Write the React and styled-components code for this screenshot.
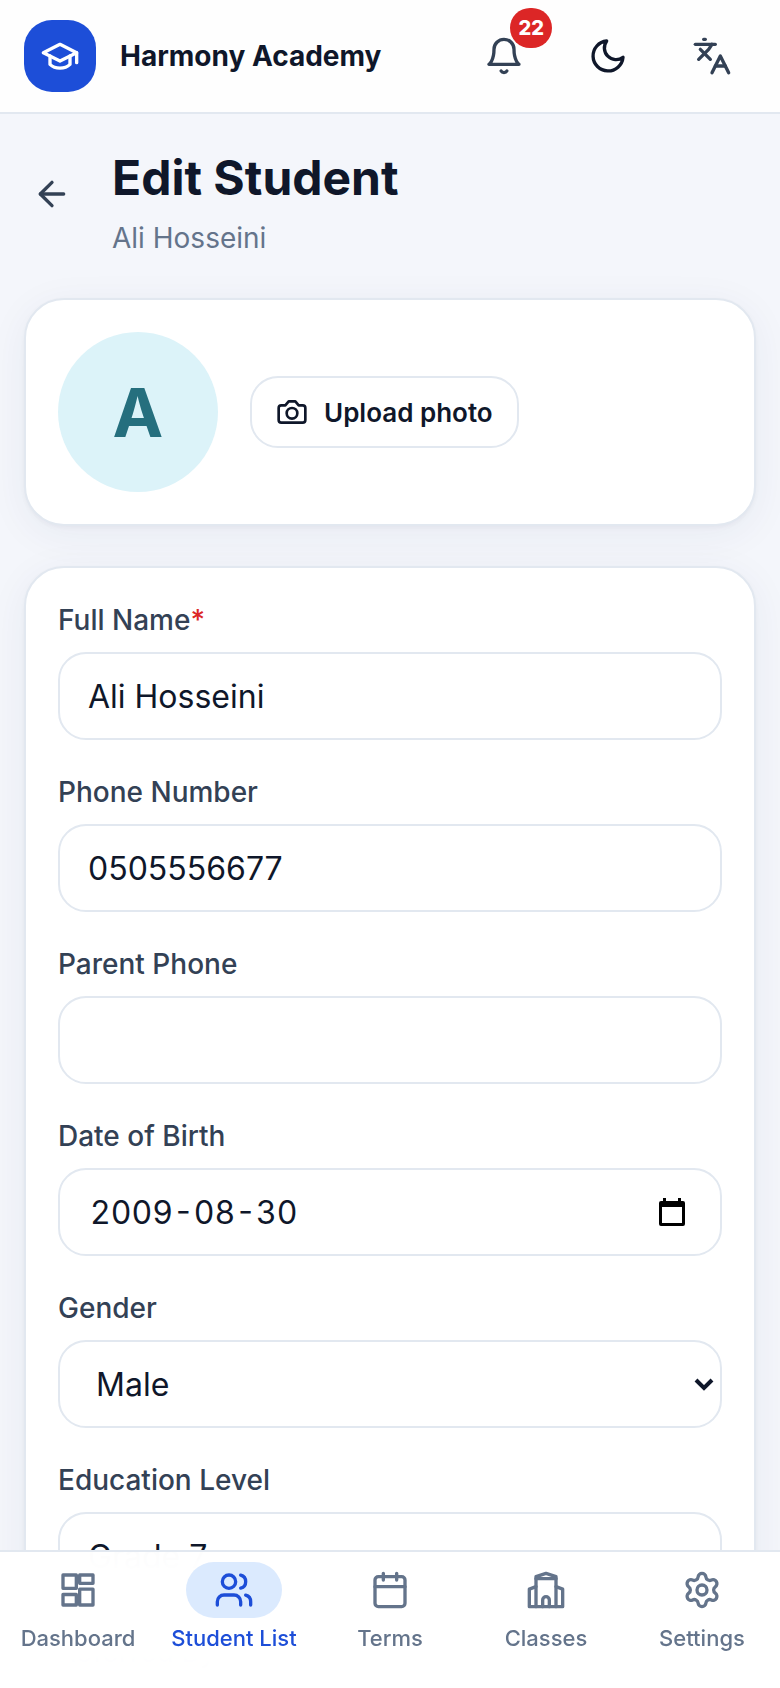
import styled, { createGlobalStyle } from "styled-components";

const ICONS = {
    cap: (
        <>
            <path d="M22 10 12 5 2 10l10 5 10-5z" />
            <path d="M6 12v5c3 3 9 3 12 0v-5" />
            <path d="M22 10v6" />
        </>
    ),
    bell: (
        <>
            <path d="M18 8A6 6 0 0 0 6 8c0 7-3 9-3 9h18s-3-2-3-9" />
            <path d="M13.73 21a2 2 0 0 1-3.46 0" />
        </>
    ),
    moon: <path d="M21 12.79A9 9 0 1 1 11.21 3 7 7 0 0 0 21 12.79z" />,
    translate: (
        <>
            <path d="m5 8 6 6" />
            <path d="m4 14 6-6 2-3" />
            <path d="M2 5h12" />
            <path d="M7 2h1" />
            <path d="m22 22-5-10-5 10" />
            <path d="M14 18h6" />
        </>
    ),
    back: (
        <>
            <path d="M19 12H5" />
            <path d="m12 19-7-7 7-7" />
        </>
    ),
    camera: (
        <>
            <path d="M14.5 4h-5L7 7H4a2 2 0 0 0-2 2v9a2 2 0 0 0 2 2h16a2 2 0 0 0 2-2V9a2 2 0 0 0-2-2h-3z" />
            <circle cx="12" cy="13" r="4" />
        </>
    ),
    dashboard: (
        <>
            <path d="M3 3h8v8H3z" />
            <path d="M13 3h8v5h-8z" />
            <path d="M13 11.5h8V21h-8z" />
            <path d="M3 14.7h8V21H3z" />
        </>
    ),
    users: (
        <>
            <path d="M16 21v-2a4 4 0 0 0-4-4H6a4 4 0 0 0-4 4v2" />
            <circle cx="9" cy="7" r="4" />
            <path d="M22 21v-2a4 4 0 0 0-3-3.87" />
            <path d="M16 3.13a4 4 0 0 1 0 7.75" />
        </>
    ),
    calendar: (
        <>
            <rect x="3" y="4" width="18" height="18" rx="2" />
            <path d="M16 2v4M8 2v4M3 10h18" />
        </>
    ),
    building: (
        <>
            <path d="M6 22V4l6-2 6 2v18" />
            <path d="M6 5.2h12" />
            <path d="M6 10l-4 1.5V22h20V11.5L18 10" />
            <path d="M10 22v-4a2 2 0 0 1 4 0v4" />
        </>
    ),
    settings: (
        <>
            <path d="M9.671 4.136a2.34 2.34 0 0 1 4.659 0 2.34 2.34 0 0 0 3.319 1.915 2.34 2.34 0 0 1 2.33 4.033 2.34 2.34 0 0 0 0 3.831 2.34 2.34 0 0 1-2.33 4.033 2.34 2.34 0 0 0-3.319 1.915 2.34 2.34 0 0 1-4.659 0 2.34 2.34 0 0 0-3.32-1.915 2.34 2.34 0 0 1-2.33-4.033 2.34 2.34 0 0 0 0-3.831A2.34 2.34 0 0 1 6.35 6.051a2.34 2.34 0 0 0 3.319-1.915" />
            <circle cx="12" cy="12" r="3" />
        </>
    ),
};

const NAV = [
    { label: "Dashboard", icon: "dashboard" },
    { label: "Student List", icon: "users", active: true },
    { label: "Terms", icon: "calendar" },
    { label: "Classes", icon: "building" },
    { label: "Settings", icon: "settings" },
];

const Icon = ({ name, size = 40 }) => (
    <IconSvg viewBox="0 0 24 24" width={size} height={size} aria-hidden="true">
        {ICONS[name]}
    </IconSvg>
);

const App = () => {
    return (
        <Shell>
            <GlobalStyle />
            <Header>
                <Logo>
                    <Icon name="cap" />
                </Logo>
                <Brand>Harmony Academy</Brand>
                <Actions>
                    <IconButton aria-label="Notifications">
                        <Icon name="bell" />
                        <Badge>22</Badge>
                    </IconButton>
                    <IconButton aria-label="Dark mode" $dark>
                        <Icon name="moon" />
                    </IconButton>
                    <IconButton aria-label="Language">
                        <Icon name="translate" />
                    </IconButton>
                </Actions>
            </Header>

            <Main>
                <PageHead>
                    <BackButton aria-label="Back">
                        <Icon name="back" />
                    </BackButton>
                    <div>
                        <Title>Edit Student</Title>
                        <Subtitle>Ali Hosseini</Subtitle>
                    </div>
                </PageHead>

                <PhotoCard>
                    <Avatar>A</Avatar>
                    <UploadButton type="button">
                        <Icon name="camera" size={32} />
                        Upload photo
                    </UploadButton>
                </PhotoCard>

                <FormCard>
                    <Field>
                        <Label htmlFor="name">
                            Full Name<Required>*</Required>
                        </Label>
                        <Input id="name" defaultValue="Ali Hosseini" />
                    </Field>
                    <Field>
                        <Label htmlFor="phone">Phone Number</Label>
                        <Input id="phone" type="tel" defaultValue="0505556677" />
                    </Field>
                    <Field>
                        <Label htmlFor="parent">Parent Phone</Label>
                        <Input id="parent" type="tel" />
                    </Field>
                    <Field>
                        <Label htmlFor="birth">Date of Birth</Label>
                        <InputWrap>
                            <DateInput id="birth" inputMode="numeric" defaultValue="2009-08-30" />
                            <PickerButton type="button" aria-label="Open calendar">
                                <svg viewBox="0 0 26 28" width="26" height="28" aria-hidden="true">
                                    <path
                                        fillRule="evenodd"
                                        d="M4 0h3v3h12V0h3v3h2a2 2 0 0 1 2 2v21a2 2 0 0 1-2 2H2a2 2 0 0 1-2-2V5a2 2 0 0 1 2-2h2zM3 9v16h20V9z"
                                    />
                                </svg>
                            </PickerButton>
                        </InputWrap>
                    </Field>
                    <Field>
                        <Label htmlFor="gender">Gender</Label>
                        <InputWrap>
                            <Select id="gender" defaultValue="Male">
                                <option>Male</option>
                                <option>Female</option>
                            </Select>
                            <Chevron viewBox="0 0 20 14" aria-hidden="true">
                                <path d="m2 2 8 8 8-8" />
                            </Chevron>
                        </InputWrap>
                    </Field>
                    <Field>
                        <Label htmlFor="level">Education Level</Label>
                        <Input id="level" defaultValue="Grade 7" />
                    </Field>
                    <Field>
                        <Label htmlFor="referred">Referred By</Label>
                        <Input id="referred" />
                    </Field>
                </FormCard>
            </Main>

            <BottomNav>
                {NAV.map((item) => (
                    <NavLink href="#" key={item.label} $active={item.active}>
                        <NavPill $active={item.active}>
                            <Icon name={item.icon} />
                        </NavPill>
                        {item.label}
                    </NavLink>
                ))}
            </BottomNav>
        </Shell>
    );
};

const GlobalStyle = createGlobalStyle`
    * {
        box-sizing: border-box;
    }

    body {
        margin: 0;
        color: #0f172a;
        background: #f4f6fb;
        font-family: Inter, "Liberation Sans", sans-serif;
    }

    button, input, select {
        font-family: inherit;
        color: inherit;
    }
`;

const Shell = styled.div`
    position: relative;
    display: flex;
    flex-direction: column;
    height: 100vh;
    overflow: hidden;
`;

const IconSvg = styled.svg`
    display: block;
    flex-shrink: 0;
    fill: none;
    stroke: currentColor;
    stroke-width: 2;
    stroke-linecap: round;
    stroke-linejoin: round;
`;

const Header = styled.header`
    display: flex;
    flex-shrink: 0;
    align-items: center;
    gap: 24px;
    padding: 12px 24px;
    background: #fefefe;
    border-bottom: 2px solid #e2e8f0;
`;

const Logo = styled.div`
    display: grid;
    place-items: center;
    width: 72px;
    height: 72px;
    border-radius: 28px;
    color: #ffffff;
    background: #1d4ed8;
`;

const Brand = styled.span`
    flex: 1;
    font-size: 28px;
    line-height: 40px;
    font-weight: 700;
`;

const Actions = styled.div`
    display: flex;
    gap: 16px;
`;

const IconButton = styled.button`
    position: relative;
    display: grid;
    place-items: center;
    width: 88px;
    height: 88px;
    padding: 0;
    border: 0;
    border-radius: 28px;
    background: transparent;
    color: ${(props) => (props.$dark ? "#0f172a" : "#334155")};
`;

const Badge = styled.span`
    position: absolute;
    top: -4px;
    right: -4px;
    min-width: 40px;
    padding: 0 8px;
    border-radius: 20px;
    color: #ffffff;
    background: #dc2626;
    font-size: 20px;
    line-height: 40px;
    font-weight: 800;
`;

const Main = styled.main`
    flex: 1;
    min-height: 0;
    overflow-y: auto;
    scrollbar-width: none;
    padding: 32px 24px 160px;
`;

const PageHead = styled.div`
    display: flex;
    align-items: flex-start;
    gap: 24px;
    margin-bottom: 40px;
`;

const BackButton = styled.button`
    display: grid;
    place-items: center;
    width: 72px;
    height: 72px;
    margin: 12px 0 0 -8px;
    padding: 0;
    border: 0;
    border-radius: 28px;
    background: transparent;
    color: #334155;
`;

const Title = styled.h1`
    margin: 0;
    font-size: 48px;
    line-height: 64px;
    font-weight: 700;
`;

const Subtitle = styled.p`
    margin: 8px 0 0;
    color: #64748b;
    font-size: 28px;
    line-height: 40px;
`;

const Card = styled.section`
    padding: 32px;
    border: 2px solid #e2e8f0;
    border-radius: 40px;
    background: #ffffff;
    box-shadow: 0 2px 4px rgba(15, 23, 42, 0.04), 0 8px 40px rgba(30, 50, 110, 0.06);
`;

const PhotoCard = styled(Card)`
    display: flex;
    align-items: center;
    gap: 32px;
    margin-bottom: 40px;
`;

const Avatar = styled.div`
    display: grid;
    place-items: center;
    width: 160px;
    height: 160px;
    border-radius: 50%;
    color: #256f7e;
    background: #dcf3f9;
    font-size: 68px;
    font-weight: 700;
`;

const UploadButton = styled.button`
    display: flex;
    align-items: center;
    gap: 16px;
    height: 72px;
    padding: 0 24px;
    border: 2px solid #e2e8f0;
    border-radius: 28px;
    background: #ffffff;
    font-size: 26px;
    font-weight: 600;
`;

const FormCard = styled(Card).attrs({ as: "form" })`
    display: flex;
    flex-direction: column;
    gap: 32px;
`;

const Field = styled.div`
    display: flex;
    flex-direction: column;
    gap: 12px;
`;

const Label = styled.label`
    color: #334155;
    font-size: 28px;
    line-height: 40px;
    font-weight: 500;
`;

const Required = styled.span`
    color: #dc2626;
`;

const Input = styled.input`
    display: block;
    width: 100%;
    height: 88px;
    padding: 0 28px;
    border: 2px solid #e2e8f0;
    border-radius: 28px;
    background: #ffffff;
    font-size: 32px;
    outline: none;
`;

const InputWrap = styled.div`
    position: relative;
`;

const DateInput = styled(Input)`
    padding: 0 84px 0 30px;
    font-variant-numeric: tabular-nums;
`;

const PickerButton = styled.button`
    position: absolute;
    top: 0;
    right: 24px;
    display: grid;
    place-items: center;
    width: 52px;
    height: 88px;
    padding: 0;
    border: 0;
    background: transparent;
`;

const Select = styled(Input).attrs({ as: "select" })`
    padding: 0 36px;
    appearance: none;
`;

const Chevron = styled.svg`
    position: absolute;
    top: 50%;
    right: 8px;
    width: 20px;
    height: 14px;
    margin-top: -6px;
    fill: none;
    stroke: #0f172a;
    stroke-width: 4;
    pointer-events: none;
`;

const BottomNav = styled.nav`
    position: absolute;
    right: 0;
    bottom: 0;
    left: 0;
    display: grid;
    grid-template-columns: repeat(5, 1fr);
    padding: 10px 0 34px;
    border-top: 2px solid #e2e8f0;
    background: rgba(255, 255, 255, 0.98);
    backdrop-filter: blur(24px);
`;

const NavLink = styled.a`
    display: flex;
    flex-direction: column;
    align-items: center;
    gap: 4px;
    color: ${(props) => (props.$active ? "#1d4ed8" : "#64748b")};
    font-size: 22px;
    line-height: 32px;
    font-weight: 500;
    text-decoration: none;
    white-space: nowrap;
`;

const NavPill = styled.span`
    display: grid;
    place-items: center;
    width: 96px;
    height: 56px;
    border-radius: 28px;
    background: ${(props) => (props.$active ? "#dbeafe" : "transparent")};
`;

export default App;
